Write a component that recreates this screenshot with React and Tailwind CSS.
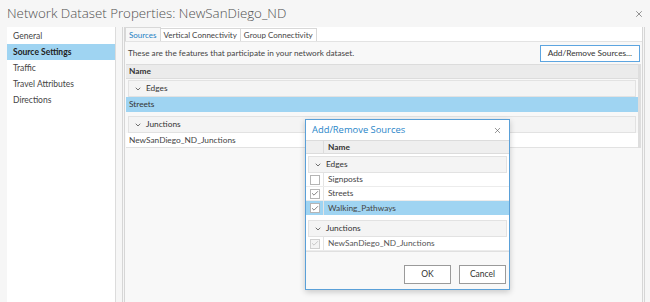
import { X, ChevronDown, Check } from 'lucide-react';

const font = { fontFamily: 'Lato, "Open Sans", "Liberation Sans", sans-serif' };
const titleFont = { fontFamily: '"Open Sans", "Noto Sans", sans-serif' };

function GroupRow({ label }) {
  return (
    <div className="flex items-center gap-[4px] h-[17px] mx-[2px] bg-[#f4f4f4] border border-[#e2e2e2] pl-[5px] text-[8.3px] text-[#333]">
      <ChevronDown size={8} strokeWidth={2.5} className="text-[#555]" />
      <span>{label}</span>
    </div>
  );
}

function CheckBox({ checked, disabled }) {
  return (
    <div
      className={`w-[10px] h-[10px] border flex items-center justify-center ${
        disabled ? 'border-[#d0d0d0] bg-[#f4f4f4]' : 'border-[#b5b5b5] bg-white'
      }`}
    >
      {checked && (
        <Check size={9} strokeWidth={2} className={disabled ? 'text-[#b0b0b0]' : 'text-[#444]'} />
      )}
    </div>
  );
}

function DialogRow({ label, checked, disabled, selected }) {
  return (
    <div className={`flex items-center h-[14px] text-[8.3px] ${selected ? 'bg-[#9fd4f2]' : 'bg-white border-b border-[#ececec]'}`}>
      <div className="w-[18px] flex justify-center border-r border-[#e4e4e4] h-full items-center">
        <CheckBox checked={checked} disabled={disabled} />
      </div>
      <span className={`pl-[4px] ${disabled ? 'text-[#555]' : 'text-[#444]'}`}>{label}</span>
    </div>
  );
}

export default function App() {
  const nav = ['General', 'Source Settings', 'Traffic', 'Travel Attributes', 'Directions'];

  return (
    <div className="relative w-[650px] h-[302px] overflow-hidden bg-[#f6f6f6] text-[#333]" style={font}>
      {/* Title bar */}
      <div className="flex items-center justify-between h-[27px] pl-[7px] pr-[6px]">
        <span className="text-[13.3px] font-light text-[#505050]" style={titleFont}>
          Network Dataset Properties: NewSanDiego_ND
        </span>
        <X size={10} strokeWidth={1.5} className="text-[#555]" />
      </div>

      <div className="flex h-[280px] pl-[7px] pr-[5px]">
        {/* Left navigation */}
        <div className="w-[109px] bg-white border-r border-[#dcdcdc] pt-[1px]">
          {nav.map((item) => (
            <div
              key={item}
              className={`h-[16px] flex items-center pl-[6px] text-[8.5px] ${
                item === 'Source Settings' ? 'bg-[#9fd4f2] font-bold text-[#222]' : 'text-[#444]'
              }`}
            >
              {item}
            </div>
          ))}
        </div>

        <div className="w-[6px]" />

        {/* Right panel */}
        <div className="flex-1 border-l-[3px] border-double border-[#d6d6d6] border-r-[3px] flex flex-col">
          {/* Tabs */}
          <div className="flex items-end h-[14px] bg-white">
            <div className="h-[14px] px-[3px] flex items-center text-[8px] text-[#1b80c4] bg-[#f7f7f7] border border-b-0 border-[#d8d8d8]">
              Sources
            </div>
            <div className="h-[13px] px-[3px] flex items-center text-[8px] text-[#444] border-r border-t border-[#d8d8d8]">
              Vertical Connectivity
            </div>
            <div className="h-[13px] px-[3px] flex items-center text-[8px] text-[#444] border-r border-t border-[#d8d8d8]">
              Group Connectivity
            </div>
          </div>

          <div className="flex-1 bg-[#f8f8f8] border-t border-[#e3e3e3]">
            {/* Description + button */}
            <div className="flex items-center justify-between h-[22px] pl-[3px] pr-[2px]">
              <span className="text-[8.2px] text-[#444]">
                These are the features that participate in your network dataset.
              </span>
              <button className="h-[17px] px-[7px] bg-white border border-[#5da5e0] text-[8.3px] text-[#333]">
                Add/Remove Sources...
              </button>
            </div>

            {/* Table */}
            <div className="mx-[1px] border-r-[3px] border-[#dedede]">
              <div className="h-[15px] flex items-center pl-[3px] bg-[#ebebeb] border-y border-[#dcdcdc] text-[8.3px] font-bold text-[#333]">
                Name
              </div>
              <div className="pt-[1px]">
                <GroupRow label="Edges" />
              </div>
              <div className="h-[15px] flex items-center pl-[3px] bg-[#9fd4f2] text-[8.3px] text-[#333]">Streets</div>
              <div className="pt-[4px]">
                <GroupRow label="Junctions" />
              </div>
              <div className="h-[15px] flex items-center pl-[3px] bg-white border-b border-[#e2e2e2] text-[8.3px] text-[#444]">
                NewSanDiego_ND_Junctions
              </div>
            </div>
          </div>
        </div>
      </div>

      {/* Add/Remove Sources dialog */}
      <div className="absolute left-[305px] top-[119px] w-[205px] h-[171px] bg-white border border-[#5aa0d8] shadow-[0_2px_6px_rgba(0,0,0,0.2)] flex flex-col">
        <div className="flex items-center justify-between h-[20px] pl-[6px] pr-[7px]">
          <span className="text-[9.4px] text-[#2a86c9]" style={titleFont}>Add/Remove Sources</span>
          <X size={9} strokeWidth={1.6} className="text-[#555]" />
        </div>
        <div className="flex h-[14px] bg-[#efefef] border-y border-[#dcdcdc] text-[8.3px] font-bold text-[#333]">
          <div className="w-[18px] border-r border-[#dcdcdc]" />
          <span className="pl-[4px] flex items-center">Name</span>
        </div>
        <div className="pt-[2px]">
          <GroupRow label="Edges" />
        </div>
        <DialogRow label="Signposts" />
        <DialogRow label="Streets" checked />
        <DialogRow label="Walking_Pathways" checked selected />
        <div className="pt-[5px]">
          <GroupRow label="Junctions" />
        </div>
        <DialogRow label="NewSanDiego_ND_Junctions" checked disabled />
        <div className="flex-1 bg-[#f8f8f8] border-t border-[#e0e0e0] flex items-end justify-end gap-[8px] pb-[5px] pr-[3px]">
          <button className="w-[47px] h-[19px] bg-white border border-[#9a9a9a] text-[8.5px] text-[#333]">OK</button>
          <button className="w-[47px] h-[19px] bg-white border border-[#9a9a9a] text-[8.5px] text-[#333]">Cancel</button>
        </div>
      </div>
    </div>
  );
}
